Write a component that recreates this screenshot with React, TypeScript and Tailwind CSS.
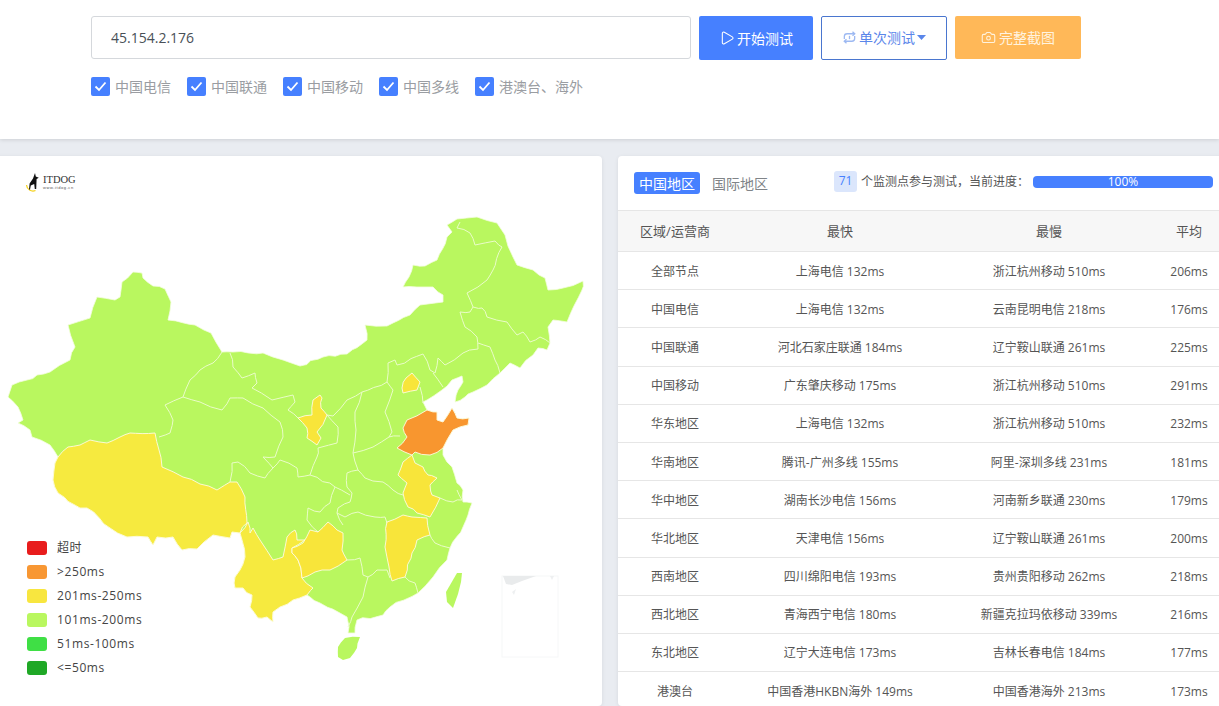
import { Play, Camera } from "lucide-react";

const rows = [
  ["全部节点", "上海电信 132ms", "浙江杭州移动 510ms", "206ms"],
  ["中国电信", "上海电信 132ms", "云南昆明电信 218ms", "176ms"],
  ["中国联通", "河北石家庄联通 184ms", "辽宁鞍山联通 261ms", "225ms"],
  ["中国移动", "广东肇庆移动 175ms", "浙江杭州移动 510ms", "291ms"],
  ["华东地区", "上海电信 132ms", "浙江杭州移动 510ms", "232ms"],
  ["华南地区", "腾讯-广州多线 155ms", "阿里-深圳多线 231ms", "181ms"],
  ["华中地区", "湖南长沙电信 156ms", "河南新乡联通 230ms", "179ms"],
  ["华北地区", "天津电信 156ms", "辽宁鞍山联通 261ms", "200ms"],
  ["西南地区", "四川绵阳电信 193ms", "贵州贵阳移动 262ms", "218ms"],
  ["西北地区", "青海西宁电信 180ms", "新疆克拉玛依移动 339ms", "216ms"],
  ["东北地区", "辽宁大连电信 173ms", "吉林长春电信 184ms", "177ms"],
  ["港澳台", "中国香港HKBN海外 149ms", "中国香港海外 213ms", "173ms"],
];

const checks = ["中国电信", "中国联通", "中国移动", "中国多线", "港澳台、海外"];

const legend = [
  ["bg-[#e81c1c]", "超时"],
  ["bg-[#f89733]", ">250ms"],
  ["bg-[#f8e63f]", "201ms-250ms"],
  ["bg-[#b9f75f]", "101ms-200ms"],
  ["bg-[#3fdf45]", "51ms-100ms"],
  ["bg-[#1fa826]", "<=50ms"],
];

const GREEN = "#b9f75f";
const YELLOW = "#f6ea3f";
const GOLD = "#f8e53a";
const ORANGE = "#f8962f";

type P = number[];

function segment(a: P, b: P): P[] {
  const swapped = a[0] > b[0] || (a[0] === b[0] && a[1] > b[1]);
  const p = swapped ? b : a;
  const q = swapped ? a : b;
  const len = Math.hypot(q[0] - p[0], q[1] - p[1]);
  const n = len > 24 ? 4 : len > 9 ? 2 : 1;
  const out: P[] = [];
  for (let k = 1; k < n; k++) {
    const t = k / n;
    const s1 = Math.sin(p[0] * 12.9 + p[1] * 78.2 + q[0] * 37.7 + q[1] * 11.3 + k * 5.1) * 43758.5;
    const s2 = Math.sin(p[0] * 41.3 + p[1] * 17.1 + q[0] * 63.9 + q[1] * 29.7 + k * 3.3) * 24634.6;
    const fx = s1 - Math.floor(s1) - 0.5;
    const fy = s2 - Math.floor(s2) - 0.5;
    out.push([p[0] + (q[0] - p[0]) * t + fx * 2.2, p[1] + (q[1] - p[1]) * t + fy * 2.2]);
  }
  return swapped ? out.reverse() : out;
}

function rough(s: string, closed = true): string {
  const pts = s.split(" ").map((v) => v.split(",").map(Number));
  const out: P[] = [];
  const count = closed ? pts.length : pts.length - 1;
  for (let i = 0; i < count; i++) {
    const a = pts[i];
    const b = pts[(i + 1) % pts.length];
    out.push(a, ...segment(a, b));
  }
  if (!closed) out.push(pts[pts.length - 1]);
  return out.map((v) => `${v[0].toFixed(1)},${v[1].toFixed(1)}`).join(" ");
}

const base =
  "133,272 142,273 143,278 153,286 165,289 171,302 168,320 195,325 211,333 222,352 233,352 263,353 283,360 300,366 323,357 347,354 367,340 365,325 387,326 410,315 420,305 443,302 443,295 433,287 417,287 403,287 413,265 425,266 437,260 447,237 452,232 447,225 457,219 477,217 497,223 505,235 513,257 517,265 533,270 545,278 548,290 563,288 583,281 582,290 567,322 553,320 548,327 550,343 547,350 538,348 533,355 520,368 510,363 500,373 487,385 473,392 465,397 455,402 458,390 463,382 462,376 452,380 442,390 427,400 423,402 427,410 437,412 437,420 443,422 452,408 457,418 469,418 468,425 453,430 443,448 443,455 452,467 457,483 463,490 463,502 472,503 468,515 463,527 450,548 447,560 433,577 418,593 390,607 383,615 357,620 355,633 348,633 348,622 347,617 320,603 310,597 307,595 293,600 280,607 273,612 273,622 267,617 258,618 250,607 252,595 243,588 235,588 235,577 240,570 245,557 242,540 240,533 232,532 230,538 213,535 197,549 182,550 173,537 157,537 153,545 148,537 127,537 110,528 87,508 80,508 58,493 53,480 55,463 58,457 50,445 32,437 30,430 18,423 23,420 18,407 8,397 12,385 27,380 37,375 50,372 70,360 75,347 68,325 90,318 97,297 115,300 120,297 122,282";

const tibet =
  "58,457 68,447 80,445 90,440 107,443 120,437 130,433 155,433 159,450 162,467 183,477 200,484 217,490 230,482 237,482 245,497 247,523 240,533 232,532 230,538 213,535 197,549 182,550 173,537 157,537 153,545 148,537 127,537 110,528 87,508 80,508 58,493 53,480 55,463";
const yunnan =
  "240,533 248,522 250,533 253,528 260,540 273,560 283,557 287,537 295,530 297,540 305,540 292,548 292,553 298,560 302,578 313,588 307,595 293,600 280,607 273,612 273,622 267,617 258,618 250,607 252,595 243,588 235,588 235,577 240,570 245,557 242,540";
const guizhou =
  "292,548 303,543 310,530 318,532 328,522 337,530 343,533 342,550 347,560 330,570 315,572 302,578 298,560 292,553";
const anhui =
  "412,455 415,463 423,467 428,475 437,478 430,485 432,495 440,498 430,517 417,513 408,507 403,493 407,483 398,475 403,462";
const jiangxi =
  "387,522 403,515 412,517 427,518 430,535 417,540 412,553 405,577 392,581 389,567 385,547";
const shandong =
  "427,410 437,412 437,420 443,422 452,408 457,418 469,418 468,425 453,430 443,448 430,455 415,452 412,455 397,448 407,437 403,428 407,420";
const ningxia =
  "320,395 313,400 312,415 298,418 307,428 307,438 317,445 321,438 317,432 327,415 321,408 322,398";
const beijing =
  "412,373 420,382 417,390 403,393 402,388 406,378";

const borders = [
  "222,352 213,363 200,370 190,380 183,397 165,405 173,420 170,433 159,437",
  "183,397 200,402 222,410 230,398 243,398 263,408 280,422 283,437 275,457 263,457 273,468 265,478 250,473 238,462 232,463 230,482",
  "230,353 233,367 242,378 255,373 257,383 252,388 272,400 293,395 295,402 288,410 298,418",
  "327,415 333,416 347,400 362,392 387,382 388,363 395,360 397,365 423,354 430,370 435,373 438,358 445,365 463,353 478,349 477,337 465,327 460,312 470,312 473,307 467,293 487,280 493,270 502,247 495,241 475,245 470,233 457,228 460,222",
  "473,307 482,308 487,317 507,322 517,335 523,332 530,342 540,337 550,343",
  "478,343 490,347 495,360 500,373",
  "433,373 443,387",
  "387,382 393,390 385,412 392,432 389,437 400,436",
  "420,387 423,403",
  "362,392 355,412 356,430 353,453",
  "389,437 373,447 353,453",
  "327,415 338,427 337,443 318,448 317,457 310,475",
  "273,468 280,460 297,468 298,477 310,475 335,487 350,495",
  "353,453 358,470 365,478 383,482 393,490 403,495",
  "358,470 347,473 347,487 352,493 350,502 338,508 337,513 343,525",
  "335,487 330,503 320,512 308,508 307,520 318,532",
  "337,513 345,517 358,512 375,517 385,517 387,523",
  "347,560 360,558 363,575 368,577 377,570 387,570 390,578",
  "368,577 363,597 352,617 348,627",
  "405,577 415,583 418,593",
  "430,535 435,543 450,548",
  "440,498 453,502 462,500 457,490",
];

function ChinaMap() {
  return (
    <svg viewBox="-8 156 610 550" className="block w-[610px] h-[550px]">
      <polygon points={rough(base)} fill={GREEN} stroke="#f4fde0" strokeWidth="0.8" strokeLinejoin="round" />
      <g fill="none" stroke="#eafcc8" strokeWidth="1" strokeLinejoin="round">
        {borders.map((b, i) => (
          <polyline key={i} points={rough(b, false)} />
        ))}
      </g>
      <g stroke="#fffbe0" strokeWidth="0.9" strokeLinejoin="round">
        <polygon points={rough(tibet)} fill={YELLOW} />
        <polygon points={rough(yunnan)} fill={YELLOW} />
        <polygon points={rough(guizhou)} fill={GOLD} />
        <polygon points={rough(anhui)} fill={GOLD} />
        <polygon points={rough(jiangxi)} fill={GOLD} />
        <polygon points={rough(ningxia)} fill={GOLD} />
        <polygon points={rough(beijing)} fill={GOLD} />
        <polygon points={rough(shandong)} fill={ORANGE} />
      </g>
      <polygon points={rough("338,647 345,638 360,637 357,648 350,658 343,660 338,657")} fill={GREEN} />
      <polygon points="457,573 462,573 461,582 458,594 453,608 447,602 446,592" fill={GREEN} />
      <rect x="502" y="576" width="56" height="81" fill="#ffffff" stroke="#f6f7f8" strokeWidth="1" />
      <polygon points="503,576 536,576 522,581 512,585 506,584" fill="#e9ebec" />
      <polygon points="512,592 516,589 514,595" fill="#eef0f1" />
      <polygon points="550,576 554,576 552,580" fill="#eef0f1" />
    </svg>
  );
}

function Logo() {
  return (
    <div className="absolute left-[33px] top-[16px] flex items-center">
      <svg width="16" height="20" viewBox="0 0 16 20">
        <path d="M1.5 13a6.5 6.5 0 0 0 9 5.5" fill="none" stroke="#f5d21f" strokeWidth="1.3" />
        <path
          d="M10 1l.8 3.5 3 1.2-2.2 1.4-.4 10h-1.4l-.6-5-3.4 1.4-.8 4H4l.6-6L8 6.5z"
          fill="#111111"
        />
      </svg>
      <div className="flex flex-col ml-[2px] leading-none">
        <span className="text-[10.5px] leading-[11px] text-[#333] font-['Liberation_Serif',serif]">ITDOG</span>
        <span className="text-[4px] leading-[5px] tracking-[0.6px] text-[#555] font-['Liberation_Sans',sans-serif]">www.itdog.cn</span>
      </div>
    </div>
  );
}

function RepeatIcon() {
  return (
    <svg width="15" height="15" viewBox="0 0 16 16" fill="none" stroke="#9db9f2" strokeWidth="1.4">
      <path d="M2.5 9.5V7a3 3 0 0 1 3-3H13" />
      <path d="M11.2 1.8L13.6 4l-2.4 2.2" />
      <path d="M13.5 6.5V9a3 3 0 0 1-3 3H3" />
      <path d="M4.8 9.8L2.4 12l2.4 2.2" />
      <path d="M8 6.2v3.6" />
    </svg>
  );
}

export default function App() {
  return (
    <div className="h-[706px] w-[1219px] overflow-hidden bg-[#e9ecf1] font-['Open_Sans','Noto_Sans_CJK_SC',sans-serif]">
      <header className="h-[139px] bg-white shadow-[0_1px_4px_rgba(0,0,0,0.12)] pl-[91px] pt-4">
        <div className="flex items-start">
          <div className="w-[600px] h-[43px] border border-[#d5d8dc] rounded-[3px] pl-[19px] flex items-center text-[14px] text-[#495057]">
            45.154.2.176
          </div>
          <button className="ml-2 w-[114px] h-11 bg-[#4680ff] rounded-[2px] text-white text-[14px] flex items-center justify-center gap-[2px]">
            <Play size={16} strokeWidth={1.6} />
            开始测试
          </button>
          <button className="ml-2 w-[126px] h-11 pb-[1px] bg-white border border-[#4a76cf] rounded-[2px] text-[#5a86ea] text-[14px] flex items-center justify-center gap-[2px]">
            <RepeatIcon />
            单次测试
            <svg width="9" height="5" viewBox="0 0 9 5"><path d="M0 0h9L4.5 5z" fill="#5a86ea" /></svg>
          </button>
          <button className="ml-2 w-[126px] h-[43px] bg-[#ffb858] rounded-[2px] text-[#fff3df] text-[14px] flex items-center justify-center gap-[3px]">
            <Camera size={15} strokeWidth={1.7} />
            完整截图
          </button>
        </div>
        <div className="flex mt-4 gap-4">
          {checks.map((c) => (
            <label key={c} className="flex items-center gap-[5px] text-[14px] text-[#9a9da2]">
              <span className="w-[19px] h-[19px] rounded-[2px] bg-[#4680ff] flex items-center justify-center">
                <svg width="13" height="11" viewBox="0 0 13 11">
                  <path d="M1.5 5.5l3.5 3.5 6.5-7.5" fill="none" stroke="#fff" strokeWidth="1.8" />
                </svg>
              </span>
              {c}
            </label>
          ))}
        </div>
      </header>

      <main className="flex mt-[17px] ml-[-8px] gap-4">
        <section className="relative w-[610px] h-[550px] shrink-0 bg-white rounded-[4px] shadow-[0_1px_4px_rgba(0,0,0,0.08)]">
          <ChinaMap />
          <Logo />
          <div className="absolute left-[35px] top-[385px] flex flex-col gap-[10px]">
            {legend.map(([c, t]) => (
              <div key={t} className="flex items-center h-[14px]">
                <span className={`w-5 h-[14px] rounded-[3px] ${c}`} />
                <span className="ml-[10px] text-[12px] tracking-[0.6px] text-[#444]">{t}</span>
              </div>
            ))}
          </div>
        </section>

        <section className="w-[610px] h-[550px] shrink-0 bg-white rounded-[4px] shadow-[0_1px_4px_rgba(0,0,0,0.08)] overflow-hidden">
          <div className="h-[55px] flex items-center pl-4 border-b border-[#e6e6e6]">
            <span className="w-[66px] h-[22px] rounded-[3px] bg-[#4680ff] text-white text-[14px] flex items-center justify-center">中国地区</span>
            <span className="ml-3 text-[14px] text-[#808488]">国际地区</span>
            <span className="ml-[66px] w-[23px] h-[21px] -mt-[4px] rounded-[3px] bg-[#dbe6fc] text-[#4680ff] text-[12px] flex items-center justify-center">71</span>
            <span className="ml-1 -mt-[2px] text-[12px] text-[#555]">个监测点参与测试，当前进度：</span>
            <div className="ml-[4px] -mt-[3px] w-[180px] h-3 rounded-[4px] bg-[#4680ff] text-white text-[12px] leading-3 text-center">100%</div>
          </div>
          <div className="grid grid-cols-[114px_216px_202px_78px] h-[41px] pt-[1px] items-center bg-[#f7f7f7] border-b border-[#e6e6e6] text-[13px] text-[#555] text-center">
            <span>区域/运营商</span>
            <span>最快</span>
            <span>最慢</span>
            <span>平均</span>
          </div>
          {rows.map((r) => (
            <div key={r[0]} className="grid grid-cols-[114px_216px_202px_78px] h-[38.2px] pt-[2px] items-center border-b border-[#e6e6e6] text-[12px] text-[#555] text-center">
              {r.map((v, i) => (
                <span key={i}>{v}</span>
              ))}
            </div>
          ))}
        </section>
      </main>
    </div>
  );
}
